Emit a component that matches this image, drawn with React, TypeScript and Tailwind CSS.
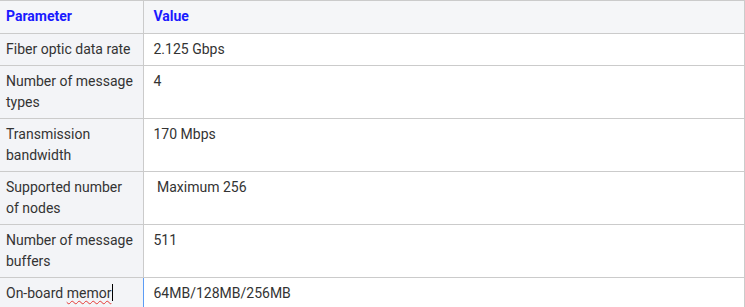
const rows: { name: string; value: string }[] = [
  { name: "Fiber optic data rate", value: "2.125 Gbps" },
  { name: "Number of message types", value: "4" },
  { name: "Transmission bandwidth", value: "170 Mbps" },
  { name: "Supported number of nodes", value: "\u00a0Maximum 256" },
  { name: "Number of message buffers", value: "511" },
];

export default function App() {
  return (
    <div className="h-[307px] w-[745px] overflow-hidden bg-white font-['Roboto',sans-serif] text-[14px] leading-[21px] text-[#333333]">
      <table className="w-[745px] table-fixed border-collapse">
        <colgroup>
          <col className="w-[143px]" />
          <col />
        </colgroup>
        <thead>
          <tr className="bg-[#f5f6f8]">
            <th className="border border-l-0 border-[#cbcbcb] pt-[5px] pb-[6px] pl-[6px] pr-2 text-left font-bold text-[#1a1aff]">Parameter</th>
            <th className="border border-[#cbcbcb] pt-[5px] pb-[6px] pl-[10px] pr-2 text-left font-bold text-[#1a1aff]">Value</th>
          </tr>
        </thead>
        <tbody>
          {rows.map((row) => (
            <tr key={row.name}>
              <td className="border border-l-0 border-[#cbcbcb] bg-[#f3f4f7] py-[5px] pl-[6px] pr-2 align-top">{row.name}</td>
              <td className="whitespace-pre border border-[#cbcbcb] py-[5px] pl-[10px] pr-2 align-top">{row.value}</td>
            </tr>
          ))}
          <tr>
            <td className="border border-l-0 border-[#cbcbcb] border-t-[#5c9cf5] border-r-[#5c9cf5] bg-[#f3f4f7] py-[5px] pl-[6px] pr-2 align-top">
              On-board{" "}
              <span className="underline decoration-wavy decoration-[#e53935] decoration-1 underline-offset-2">memor</span>
              <span className="ml-px inline-block h-[17px] w-px bg-black align-[-3px]" />
            </td>
            <td className="border border-[#cbcbcb] py-[5px] pl-[10px] pr-2 align-top">64MB/128MB/256MB</td>
          </tr>
        </tbody>
      </table>
    </div>
  );
}
